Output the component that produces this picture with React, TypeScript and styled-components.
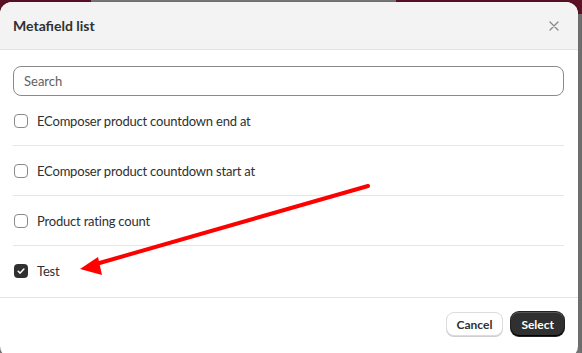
import styled, { createGlobalStyle } from 'styled-components';

const GlobalStyle = createGlobalStyle`
  html, body {
    margin: 0;
    padding: 0;
  }
  body {
    font-family: Lato, "Liberation Sans", sans-serif;
    color: #303030;
  }
`;

const fields = [
  { id: 'end', label: 'EComposer product countdown end at', checked: false },
  { id: 'start', label: 'EComposer product countdown start at', checked: false },
  { id: 'rating', label: 'Product rating count', checked: false },
  { id: 'test', label: 'Test', checked: true },
];

const App = () => {
  return (
    <>
      <GlobalStyle />
      <Backdrop>
        <Modal>
          <Header>
            <Title>Metafield list</Title>
            <CloseButton aria-label="Close">
              <svg width="10" height="10" viewBox="0 0 10 10">
                <path d="M1 1L9 9M9 1L1 9" stroke="#8a8a8a" strokeWidth="1.3" strokeLinecap="round" />
              </svg>
            </CloseButton>
          </Header>
          <Body>
            <SearchInput placeholder="Search" />
            <List>
              {fields.map((f) => (
                <Row key={f.id}>
                  <Checkbox $checked={f.checked}>
                    {f.checked && (
                      <svg width="10" height="10" viewBox="0 0 10 10">
                        <path d="M2.2 5.2L4.2 7.1L7.9 3" stroke="#fff" strokeWidth="1.5" fill="none" strokeLinecap="round" strokeLinejoin="round" />
                      </svg>
                    )}
                  </Checkbox>
                  <Label>{f.label}</Label>
                </Row>
              ))}
            </List>
          </Body>
          <Footer>
            <CancelButton>Cancel</CancelButton>
            <SelectButton>Select</SelectButton>
          </Footer>
          <Arrow width="582" height="353" viewBox="0 0 582 353">
            <line x1="368" y1="186" x2="96" y2="264" stroke="#ff0000" strokeWidth="4" strokeLinecap="round" />
            <polygon points="80,269 98,257 102,275" fill="#ff0000" />
          </Arrow>
        </Modal>
      </Backdrop>
    </>
  );
};

const Backdrop = styled.div`
  width: 582px;
  height: 353px;
  overflow: hidden;
  padding: 2px 4px 0 0;
  box-sizing: border-box;
  background:
    linear-gradient(to right, #5d1226 91px, #7f7f7f 91px 396px, #5d1226 396px) top / 100% 14px no-repeat,
    linear-gradient(to right, #7f7f7f, #6a6a6a) right / 4px 100% no-repeat,
    #7f7f7f;
`;

const Modal = styled.div`
  position: relative;
  width: 578px;
  height: 356px;
  background: #fff;
  border-radius: 12px;
  overflow: hidden;
  display: flex;
  flex-direction: column;
  box-shadow: 0 0 4px rgba(0, 0, 0, 0.3);
`;

const Header = styled.div`
  height: 47px;
  flex: none;
  background: #f3f3f3;
  border-bottom: 1px solid #e3e3e3;
  display: flex;
  align-items: center;
  justify-content: space-between;
  padding: 0 17px 0 13px;
`;

const Title = styled.h2`
  margin: 0;
  font-size: 14px;
  font-weight: 700;
  color: #303030;
`;

const CloseButton = styled.button`
  border: none;
  background: transparent;
  padding: 0;
  width: 14px;
  height: 14px;
  display: flex;
  align-items: center;
  justify-content: center;
  cursor: pointer;
`;

const Body = styled.div`
  padding: 16px 14px 0 13px;
  flex: none;
`;

const SearchInput = styled.input`
  display: block;
  width: 100%;
  box-sizing: border-box;
  height: 30px;
  border: 1px solid #8a8a8a;
  border-radius: 8px;
  padding: 0 10px;
  font-family: inherit;
  font-size: 13px;
  color: #303030;
  outline: none;

  &::placeholder {
    color: #616161;
  }
`;

const List = styled.div`
  display: flex;
  flex-direction: column;
`;

const Row = styled.label`
  height: 49px;
  display: flex;
  align-items: center;
  gap: 9px;
  padding-left: 1px;
  border-bottom: 1px solid #e6e6e6;

  &:last-child {
    border-bottom: none;
  }
`;

const Checkbox = styled.span<{ $checked: boolean }>`
  width: 14px;
  height: 14px;
  box-sizing: border-box;
  border-radius: 4px;
  border: ${(p) => (p.$checked ? 'none' : '1px solid #8a8a8a')};
  background: ${(p) => (p.$checked ? '#303030' : '#fff')};
  display: flex;
  align-items: center;
  justify-content: center;
`;

const Label = styled.span`
  font-size: 13px;
  letter-spacing: -0.2px;
  color: #303030;
`;

const Footer = styled.div`
  border-top: 1px solid #e3e3e3;
  margin-top: 2px;
  height: 52px;
  display: flex;
  align-items: center;
  justify-content: flex-end;
  gap: 8px;
  padding: 0 14px 4px 0;
`;

const CancelButton = styled.button`
  height: 24px;
  padding: 0 10px;
  border-radius: 8px;
  border: 1px solid #dcdcdc;
  background: #fff;
  font-family: inherit;
  font-size: 12px;
  font-weight: 700;
  color: #303030;
  box-shadow: 0 1px 0 #cfcfcf;
  cursor: pointer;
`;

const SelectButton = styled.button`
  height: 24px;
  padding: 0 10px;
  border-radius: 8px;
  border: none;
  background: #303030;
  font-family: inherit;
  font-size: 12px;
  font-weight: 700;
  color: #fff;
  box-shadow: inset 0 -1px 0 #000, inset 0 1px 0 #555, 0 0 0 1px #222;
  cursor: pointer;
`;

const Arrow = styled.svg`
  position: absolute;
  top: -2px;
  left: 0;
  pointer-events: none;
`;

export default App;
